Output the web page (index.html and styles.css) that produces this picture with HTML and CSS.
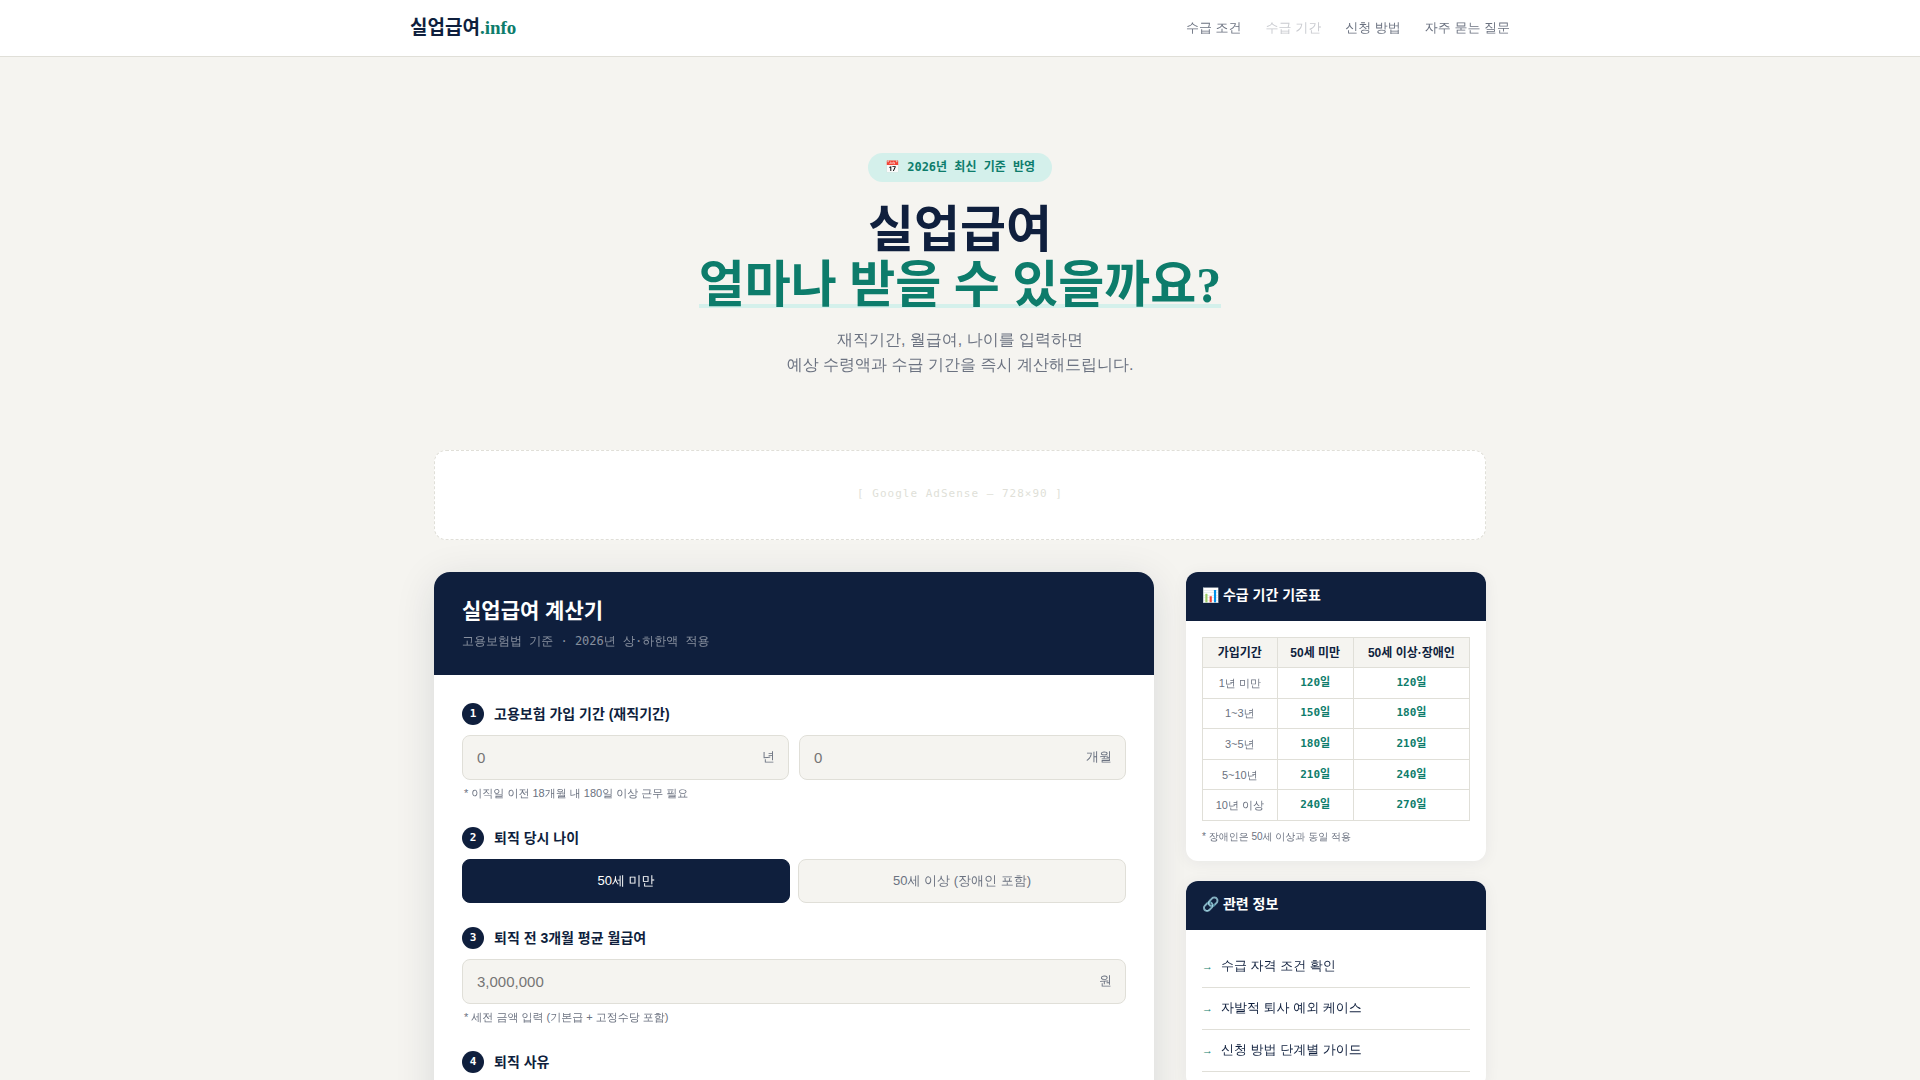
FILE: index.html
```html
<!DOCTYPE html>
<html lang="ko">
<head>
    <meta charset="UTF-8">
    <meta name="viewport" content="width=device-width, initial-scale=1.0">
    <title>실업급여 계산기</title>
    <link rel="stylesheet" href="styles.css">
</head>
<body>
<header class="header">
    <div class="header_inner">
        <a class="logo" href="#">실업급여<span>.info</span></a>
        <nav class="nav">
            <a href="#">수급 조건</a>
            <a href="#" class="dim">수급 기간</a>
            <a href="#">신청 방법</a>
            <a href="#">자주 묻는 질문</a>
        </nav>
    </div>
</header>

<section class="hero">
    <div class="badge">📅 2026년 최신 기준 반영</div>
    <h1>실업급여<br><em>얼마나 받을 수 있을까요?</em></h1>
    <p>재직기간, 월급여, 나이를 입력하면<br>예상 수령액과 수급 기간을 즉시 계산해드립니다.</p>
</section>

<div class="wrap">
    <div class="ad">[ Google AdSense — 728×90 ]</div>
</div>

<main class="wrap main">
    <section class="calc">
        <div class="calc_head">
            <h2>실업급여 계산기</h2>
            <p>고용보험법 기준 · 2026년 상·하한액 적용</p>
        </div>
        <form class="calc_body">
            <div class="group">
                <label class="label" for="years"><span class="num">1</span>고용보험 가입 기간 (재직기간)</label>
                <div class="row">
                    <div class="field">
                        <input type="text" id="years" placeholder="0">
                        <span class="unit">년</span>
                    </div>
                    <div class="field">
                        <input type="text" id="months" placeholder="0" aria-label="개월">
                        <span class="unit">개월</span>
                    </div>
                </div>
                <p class="hint">* 이직일 이전 18개월 내 180일 이상 근무 필요</p>
            </div>
            <div class="group">
                <div class="label" id="age"><span class="num">2</span>퇴직 당시 나이</div>
                <div class="toggle" role="group" aria-labelledby="age">
                    <button type="button" class="active">50세 미만</button>
                    <button type="button">50세 이상 (장애인 포함)</button>
                </div>
            </div>
            <div class="group">
                <label class="label" for="salary"><span class="num">3</span>퇴직 전 3개월 평균 월급여</label>
                <div class="field">
                    <input type="text" id="salary" placeholder="3,000,000">
                    <span class="unit">원</span>
                </div>
                <p class="hint">* 세전 금액 입력 (기본급 + 고정수당 포함)</p>
            </div>
            <div class="group">
                <div class="label"><span class="num">4</span>퇴직 사유</div>
            </div>
        </form>
    </section>

    <aside class="side">
        <section class="card">
            <h3>📊 수급 기간 기준표</h3>
            <div class="card_body">
                <table class="table">
                    <thead>
                        <tr><th>가입기간</th><th>50세 미만</th><th>50세 이상·장애인</th></tr>
                    </thead>
                    <tbody>
                        <tr><td>1년 미만</td><td class="day">120일</td><td class="day">120일</td></tr>
                        <tr><td>1~3년</td><td class="day">150일</td><td class="day">180일</td></tr>
                        <tr><td>3~5년</td><td class="day">180일</td><td class="day">210일</td></tr>
                        <tr><td>5~10년</td><td class="day">210일</td><td class="day">240일</td></tr>
                        <tr><td>10년 이상</td><td class="day">240일</td><td class="day">270일</td></tr>
                    </tbody>
                </table>
                <p class="note">* 장애인은 50세 이상과 동일 적용</p>
            </div>
        </section>
        <section class="card">
            <h3>🔗 관련 정보</h3>
            <ul class="card_body links">
                <li><a href="#">수급 자격 조건 확인</a></li>
                <li><a href="#">자발적 퇴사 예외 케이스</a></li>
                <li><a href="#">신청 방법 단계별 가이드</a></li>
            </ul>
        </section>
    </aside>
</main>
</body>
</html>
```
FILE: styles.css
```css
:root {
    --navy: #0f1f3d;
    --teal: #0d7c6b;
    --mint: #d4f0eb;
    --bg: #f5f4f0;
    --line: #e0dfd8;
    --gray: #6b7280;
    --sans: "Liberation Sans", "WenQuanYi Zen Hei", "Noto Sans CJK KR", sans-serif;
    --mono: "DejaVu Sans Mono", "WenQuanYi Zen Hei", "Noto Sans CJK KR", monospace;
    /* bold text */
    --sans-bold: "Liberation Sans", "Noto Sans CJK KR", sans-serif;
    --serif-bold: "Liberation Serif", "Noto Sans CJK KR", serif;
    --mono-bold: "DejaVu Sans Mono", "Noto Sans CJK KR", monospace;
}

* {
    margin: 0;
    padding: 0;
    box-sizing: border-box;
}

body {
    background: var(--bg);
    color: var(--navy);
    font-family: var(--sans);
    overflow-x: hidden;
}

a {
    color: inherit;
    text-decoration: none;
}

/* header */
.header {
    background: #fff;
    border-bottom: 1px solid var(--line);
}

.header_inner {
    display: flex;
    align-items: center;
    justify-content: space-between;
    max-width: 1100px;
    height: 56px;
    margin: 0 auto;
}

.logo {
    font-family: var(--serif-bold);
    font-size: 19px;
    font-weight: bold;
    line-height: 24px;
}

.logo span {
    color: var(--teal);
}

.nav {
    display: flex;
    gap: 24px;
    font-size: 13px;
    color: var(--gray);
}

.nav .dim {
    color: #c9cbd0;
}

/* hero */
.hero {
    padding: 96px 24px 73px;
    text-align: center;
}

.badge {
    display: inline-block;
    height: 29px;
    padding: 0 17px;
    border-radius: 20px;
    background: var(--mint);
    color: var(--teal);
    font-family: var(--mono-bold);
    font-size: 12px;
    font-weight: bold;
    line-height: 29px;
}

.hero h1 {
    margin: 21px 0 14px;
    font-family: var(--serif-bold);
    font-size: 50px;
    line-height: 55px;
}

.hero em {
    display: inline-block;
    background: linear-gradient(var(--mint), var(--mint)) no-repeat 0 46px / 100% 4px;
    color: var(--teal);
    font-style: normal;
}

.hero p {
    color: var(--gray);
    font-size: 16px;
    line-height: 25px;
}

.wrap {
    max-width: 1100px;
    margin: 0 auto;
    padding: 0 24px;
}

.ad {
    height: 90px;
    border: 1px dashed var(--line);
    border-radius: 12px;
    background: #fff;
    color: var(--line);
    font-family: var(--mono);
    font-size: 11px;
    letter-spacing: 1px;
    line-height: 86px;
    text-align: center;
}

.main {
    display: grid;
    grid-template-columns: minmax(0, 1fr) 300px;
    gap: 32px;
    padding-top: 32px;
    padding-bottom: 32px;
    align-items: start;
}

/* calculator */
.calc {
    border-radius: 16px;
    background: #fff;
    box-shadow: 0 8px 40px rgba(15, 31, 61, .12);
    overflow: hidden;
}

.calc_head {
    padding: 26px 28px 24px;
    background: var(--navy);
    color: #fff;
}

.calc_head h2 {
    font-family: var(--sans-bold);
    font-size: 21px;
    line-height: 26px;
}

.calc_head p {
    margin-top: 7px;
    color: rgba(255, 255, 255, .5);
    font-family: var(--mono);
    font-size: 12px;
    line-height: 20px;
}

.calc_body {
    padding: 28px;
}

.group {
    margin-bottom: 24px;
}

.label {
    display: flex;
    align-items: center;
    gap: 10px;
    margin-bottom: 10px;
    font-family: var(--sans-bold);
    font-size: 14px;
    font-weight: bold;
    line-height: 22px;
}

.num {
    width: 22px;
    height: 22px;
    border-radius: 50%;
    background: var(--navy);
    color: #fff;
    font-family: var(--mono-bold);
    font-size: 11px;
    text-align: center;
}

.row {
    display: grid;
    grid-template-columns: 1fr 1fr;
    gap: 10px;
}

.field {
    position: relative;
}

.field input {
    display: block;
    width: 100%;
    height: 45px;
    padding: 0 48px 0 14px;
    border: 1px solid var(--line);
    border-radius: 8px;
    background: var(--bg);
    font-family: var(--sans);
    font-size: 15px;
}

.unit {
    position: absolute;
    top: 0;
    right: 14px;
    color: var(--gray);
    font-size: 13px;
    line-height: 44px;
}

.hint {
    padding: 5px 2px 2px;
    color: var(--gray);
    font-size: 11px;
    line-height: 16px;
}

.toggle {
    display: grid;
    grid-template-columns: 1fr 1fr;
    gap: 8px;
}

.toggle button {
    height: 44px;
    border: 1px solid var(--line);
    border-radius: 8px;
    background: var(--bg);
    color: var(--gray);
    font-family: var(--sans);
    font-size: 13px;
}

.toggle .active {
    border-color: var(--navy);
    background: var(--navy);
    color: #fff;
}

/* sidebar */
.side {
    display: grid;
    gap: 20px;
}

.card {
    border-radius: 12px;
    background: #fff;
    box-shadow: 0 2px 16px rgba(15, 31, 61, .06);
    overflow: hidden;
}

.card h3 {
    height: 49px;
    padding: 0 16px;
    background: var(--navy);
    color: #fff;
    font-family: var(--sans-bold);
    font-size: 14px;
    line-height: 47px;
}

.card_body {
    padding: 16px;
}

.table {
    width: 100%;
    height: 184px;
    border-collapse: collapse;
    color: var(--gray);
    font-size: 11px;
    line-height: 14px;
    text-align: center;
}

.table th,
.table td {
    height: 30px;
    padding: 0 10px;
    border: 1px solid var(--line);
    white-space: nowrap;
}

.table th {
    background: var(--bg);
    color: var(--navy);
    font-family: var(--sans-bold);
    font-size: 12px;
}

.table .day {
    color: var(--teal);
    font-family: var(--mono-bold);
    font-weight: bold;
}

.note {
    margin-top: 8px;
    color: var(--gray);
    font-size: 10px;
    line-height: 16px;
}

.links {
    list-style: none;
}

.links a {
    display: flex;
    align-items: center;
    gap: 8px;
    height: 42px;
    padding-bottom: 2px;
    border-bottom: 1px solid var(--line);
    font-size: 13px;
}

.links a::before {
    content: "→";
    color: var(--teal);
    font-size: 11px;
}
```
